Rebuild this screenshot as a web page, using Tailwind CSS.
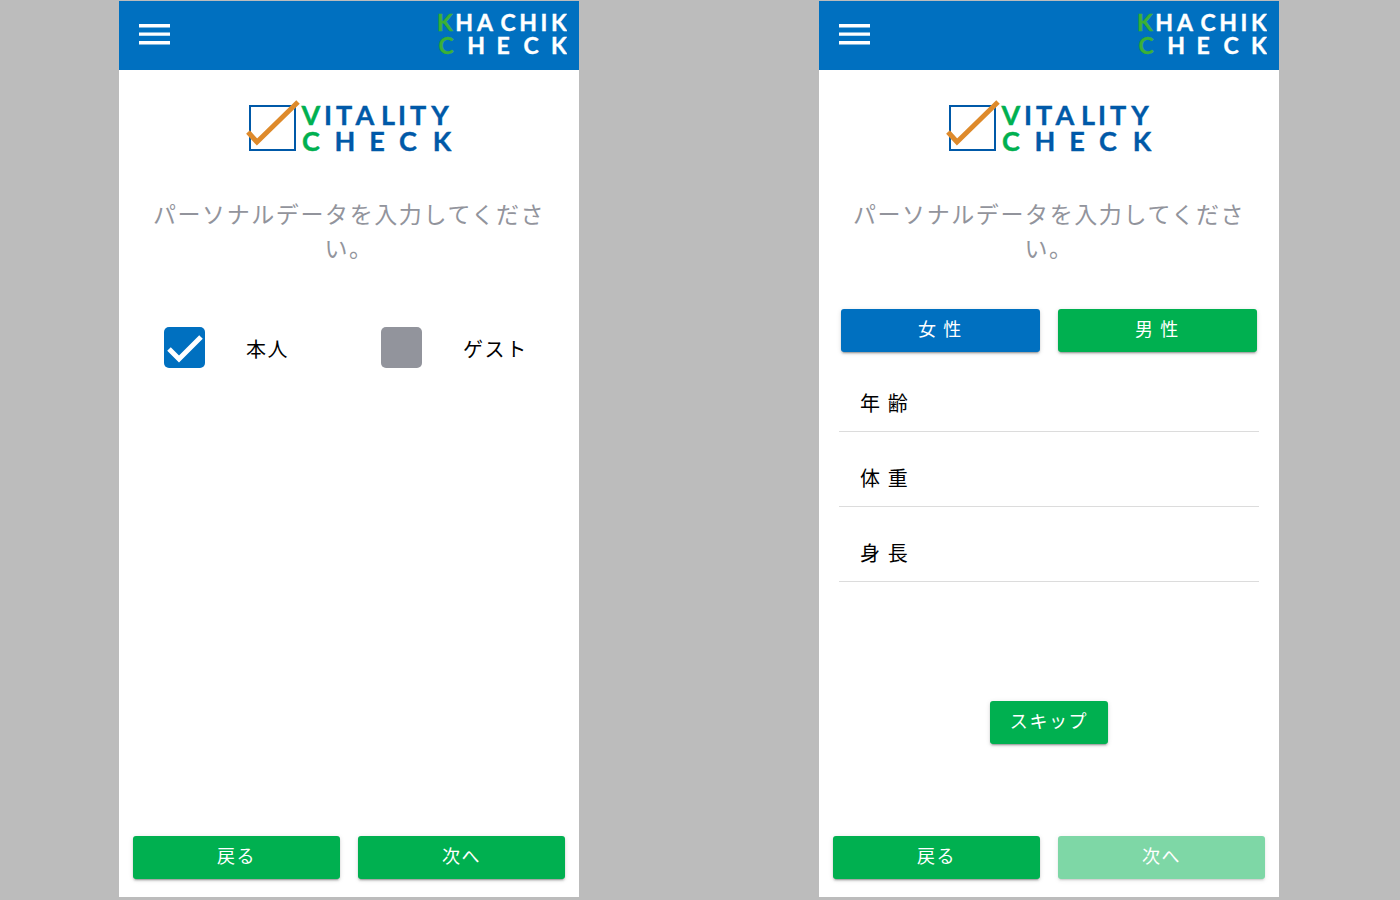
<!DOCTYPE html>
<html lang="ja">
<head>
    <meta charset="UTF-8">
    <meta name="viewport" content="width=device-width, initial-scale=1.0">
    <title>Vitality Check</title>
    <script src="https://cdn.jsdelivr.net/npm/@tailwindcss/browser@4"></script>
</head>
<body class="bg-[#bcbcbc] font-['Noto_Sans_CJK_JP',sans-serif] tracking-widest text-black">

    <!-- ロゴの共通パーツ -->
    <svg class="hidden" aria-hidden="true">
        <symbol id="khachik-logo" viewBox="0 0 130 42">
            <g class="font-[Lato,sans-serif] font-bold text-[23px] tracking-normal" text-anchor="middle" fill="#fff" stroke="#fff" stroke-width="0.4">
                <text y="18" x="8 27 48 71 91 107 122"><tspan fill="#3bb036" stroke="#3bb036">K</tspan>HACHIK</text>
                <text y="41" x="9 39 66 94 122"><tspan fill="#3bb036" stroke="#3bb036">C</tspan>HECK</text>
            </g>
        </symbol>
        <symbol id="vitality-logo" viewBox="0 0 206 54">
            <rect x="4" y="7" width="45" height="44" fill="none" stroke="#0059a8" stroke-width="2"/>
            <path d="M2 33 L11 43 L52 3" fill="none" stroke="#de8a2b" stroke-width="5"/>
            <g class="font-[Lato,sans-serif] font-bold text-[27px] tracking-normal" text-anchor="middle" fill="#0059a8" stroke="#0059a8" stroke-width="0.4">
                <text y="26" x="65 82 98 119 142 156 172 194"><tspan fill="#00b050" stroke="#00b050">V</tspan>ITALITY</text>
                <text y="52" x="65 99 131 162 196"><tspan fill="#00b050" stroke="#00b050">C</tspan>HECK</text>
            </g>
        </symbol>
    </svg>

    <div class="flex flex-wrap justify-center gap-x-60 gap-y-8 pt-px pr-[2px] pb-[3px]">

        <!-- 本人 / ゲスト選択 -->
        <main class="flex w-full max-w-[460px] min-h-[calc(100vh-4px)] flex-col bg-white">
            <header class="flex h-[69px] items-center justify-between bg-[#0070c0] pl-5 pr-3 pb-1">
                <button type="button" aria-label="メニュー">
                    <svg class="h-[22px] w-8" viewBox="0 0 32 22" fill="#fff"><path d="M0 1h31v3.4H0zM0 9.4h31v3.4H0zM0 18h31v3.4H0z"/></svg>
                </button>
                <svg class="h-[42px] w-[130px]" role="img" aria-label="KHACHIK CHECK"><use href="#khachik-logo"/></svg>
            </header>
            <svg class="mx-auto mt-[29px] h-[54px] w-[206px] shrink-0" role="img" aria-label="VITALITY CHECK"><use href="#vitality-logo"/></svg>
            <p class="mt-[43px] px-[30px] text-center text-[23px] leading-[34px] text-[#92949c]">パーソナルデータを入力してください。</p>

            <div class="mt-[63px] grid grid-cols-2 px-[13px] text-[20px]">
                <label class="flex items-center gap-[41px] pl-8">
                    <span class="grid">
                        <input type="checkbox" checked class="peer col-start-1 row-start-1 size-[41px] appearance-none rounded-[5px] bg-[#92949c] checked:bg-[#0070c0]">
                        <svg class="pointer-events-none invisible col-start-1 row-start-1 size-[41px] peer-checked:visible" viewBox="0 0 41 41" fill="none" stroke="#fff" stroke-width="5"><path d="M5 22 L15 32 L37 10"/></svg>
                    </span>
                    <span class="pt-[2px]">本人</span>
                </label>
                <label class="flex items-center gap-[41px] pl-8">
                    <span class="grid">
                        <input type="checkbox" class="peer col-start-1 row-start-1 size-[41px] appearance-none rounded-[5px] bg-[#92949c] checked:bg-[#0070c0]">
                        <svg class="pointer-events-none invisible col-start-1 row-start-1 size-[41px] peer-checked:visible" viewBox="0 0 41 41" fill="none" stroke="#fff" stroke-width="5"><path d="M5 22 L15 32 L37 10"/></svg>
                    </span>
                    <span class="pt-[2px]">ゲスト</span>
                </label>
            </div>

            <div class="mt-auto grid grid-cols-2 gap-[18px] px-[14px] pb-[18px] text-[18px] text-white">
                <button type="button" class="h-[43px] rounded-[3px] bg-[#00b050] pb-1 shadow-[0_3px_1px_-2px_rgba(0,0,0,0.2),0_2px_2px_0_rgba(0,0,0,0.14),0_1px_5px_0_rgba(0,0,0,0.12)]">戻る</button>
                <button type="button" class="h-[43px] rounded-[3px] bg-[#00b050] pb-1 shadow-[0_3px_1px_-2px_rgba(0,0,0,0.2),0_2px_2px_0_rgba(0,0,0,0.14),0_1px_5px_0_rgba(0,0,0,0.12)]">次へ</button>
            </div>
        </main>

        <!-- 性別・年齢・体重・身長 -->
        <main class="flex w-full max-w-[460px] min-h-[calc(100vh-4px)] flex-col bg-white">
            <header class="flex h-[69px] items-center justify-between bg-[#0070c0] pl-5 pr-3 pb-1">
                <button type="button" aria-label="メニュー">
                    <svg class="h-[22px] w-8" viewBox="0 0 32 22" fill="#fff"><path d="M0 1h31v3.4H0zM0 9.4h31v3.4H0zM0 18h31v3.4H0z"/></svg>
                </button>
                <svg class="h-[42px] w-[130px]" role="img" aria-label="KHACHIK CHECK"><use href="#khachik-logo"/></svg>
            </header>
            <svg class="mx-auto mt-[29px] h-[54px] w-[206px] shrink-0" role="img" aria-label="VITALITY CHECK"><use href="#vitality-logo"/></svg>
            <p class="mt-[43px] px-[30px] text-center text-[23px] leading-[34px] text-[#92949c]">パーソナルデータを入力してください。</p>

            <div class="mt-[45px] grid grid-cols-2 gap-[18px] px-[22px] text-[18px] text-white">
                <button type="button" class="h-[43px] rounded-[3px] bg-[#0070c0] pb-1 shadow-[0_3px_1px_-2px_rgba(0,0,0,0.2),0_2px_2px_0_rgba(0,0,0,0.14),0_1px_5px_0_rgba(0,0,0,0.12)]">女 性</button>
                <button type="button" class="h-[43px] rounded-[3px] bg-[#00b050] pb-1 shadow-[0_3px_1px_-2px_rgba(0,0,0,0.2),0_2px_2px_0_rgba(0,0,0,0.14),0_1px_5px_0_rgba(0,0,0,0.12)]">男 性</button>
            </div>

            <div class="mt-[5px] px-5 text-[20px]">
                <div class="flex h-[75px] items-center border-b border-[#dcdcdc] pt-[18px] pl-[21px]">
                    <label for="age" class="shrink-0">年 齢</label>
                    <input id="age" type="text" inputmode="numeric" class="ml-4 min-w-0 flex-1 outline-none">
                </div>
                <div class="flex h-[75px] items-center border-b border-[#dcdcdc] pt-[18px] pl-[21px]">
                    <label for="weight" class="shrink-0">体 重</label>
                    <input id="weight" type="text" inputmode="numeric" class="ml-4 min-w-0 flex-1 outline-none">
                </div>
                <div class="flex h-[75px] items-center border-b border-[#dcdcdc] pt-[18px] pl-[21px]">
                    <label for="height" class="shrink-0">身 長</label>
                    <input id="height" type="text" inputmode="numeric" class="ml-4 min-w-0 flex-1 outline-none">
                </div>
            </div>

            <button type="button" class="mx-auto mt-[119px] h-[43px] rounded-[3px] bg-[#00b050] px-5 pb-1 text-[18px] text-white shadow-[0_3px_1px_-2px_rgba(0,0,0,0.2),0_2px_2px_0_rgba(0,0,0,0.14),0_1px_5px_0_rgba(0,0,0,0.12)]">スキップ</button>

            <div class="mt-auto grid grid-cols-2 gap-[18px] px-[14px] pb-[18px] text-[18px] text-white">
                <button type="button" class="h-[43px] rounded-[3px] bg-[#00b050] pb-1 shadow-[0_3px_1px_-2px_rgba(0,0,0,0.2),0_2px_2px_0_rgba(0,0,0,0.14),0_1px_5px_0_rgba(0,0,0,0.12)]">戻る</button>
                <button type="button" disabled class="h-[43px] rounded-[3px] bg-[#00b050] pb-1 opacity-50 shadow-[0_3px_1px_-2px_rgba(0,0,0,0.2),0_2px_2px_0_rgba(0,0,0,0.14),0_1px_5px_0_rgba(0,0,0,0.12)]">次へ</button>
            </div>
        </main>
    </div>

</body>
</html>
